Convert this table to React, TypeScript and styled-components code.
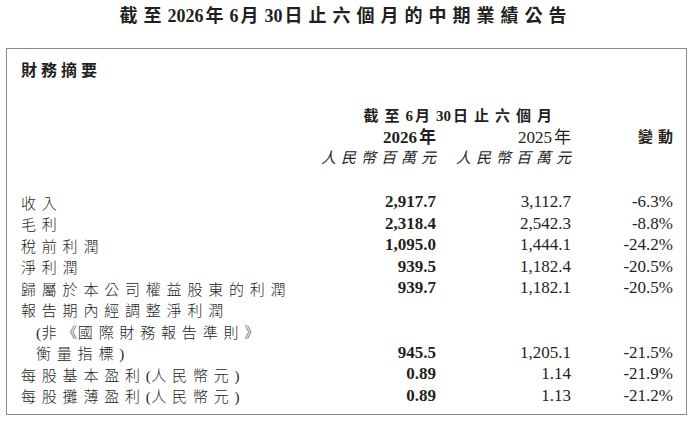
import styled, { createGlobalStyle } from "styled-components";

const GlobalStyle = createGlobalStyle`
  html, body {
    margin: 0;
    padding: 0;
    background: #ffffff;
  }
  body {
    font-family: "Liberation Serif", "Noto Sans CJK TC", serif;
    color: #231f20;
  }
`;

type Row = {
  label: string;
  indent?: boolean;
  current?: string;
  prior?: string;
  change?: string;
};

const rows: Row[] = [
  { label: "收入", current: "2,917.7", prior: "3,112.7", change: "-6.3%" },
  { label: "毛利", current: "2,318.4", prior: "2,542.3", change: "-8.8%" },
  { label: "稅前利潤", current: "1,095.0", prior: "1,444.1", change: "-24.2%" },
  { label: "淨利潤", current: "939.5", prior: "1,182.4", change: "-20.5%" },
  {
    label: "歸屬於本公司權益股東的利潤",
    current: "939.7",
    prior: "1,182.1",
    change: "-20.5%",
  },
  { label: "報告期內經調整淨利潤" },
  { label: "(非《國際財務報告準則》", indent: true },
  {
    label: "衡量指標)",
    indent: true,
    current: "945.5",
    prior: "1,205.1",
    change: "-21.5%",
  },
  { label: "每股基本盈利(人民幣元)", current: "0.89", prior: "1.14", change: "-21.9%" },
  { label: "每股攤薄盈利(人民幣元)", current: "0.89", prior: "1.13", change: "-21.2%" },
];

// brackets sit tighter than the spaced-out characters around them
function renderLabel(text: string) {
  return text.split(/([()《》])/).map((part, i) =>
    /^[()《》]$/.test(part) ? <Paren key={i}>{part}</Paren> : part
  );
}

export default function App() {
  return (
    <Page>
      <GlobalStyle />
      <Title>
        截至<Num>2026</Num>年<Num>6</Num>月<Num>30</Num>日止六個月的中期業績公告
      </Title>
      <Box>
        <Heading>財務摘要</Heading>
        <HeadBlock>
          <HeadRow>
            <span />
            <PeriodCell>
              截至<Num>6</Num>月<Num>30</Num>日止六個月
            </PeriodCell>
            <span />
          </HeadRow>
          <HeadRow>
            <span />
            <YearCell $bold>
              <Num>2026</Num>年
            </YearCell>
            <YearCell>
              <Num>2025</Num>年
            </YearCell>
            <ChangeHead>
              <Tight>變動</Tight>
            </ChangeHead>
          </HeadRow>
          <HeadRow>
            <span />
            <UnitCell>
              <Tight>人民幣百萬元</Tight>
            </UnitCell>
            <UnitCell>
              <Tight>人民幣百萬元</Tight>
            </UnitCell>
            <span />
          </HeadRow>
        </HeadBlock>
        <DataGrid>
          {rows.map((r) => (
            <DataRow key={r.label}>
              <Label $indent={r.indent}>{renderLabel(r.label)}</Label>
              <Value $bold>{r.current}</Value>
              <Value>{r.prior}</Value>
              <Value>{r.change}</Value>
            </DataRow>
          ))}
        </DataGrid>
      </Box>
    </Page>
  );
}

const Page = styled.div`
  width: 692px;
  height: 422px;
  overflow: hidden;
`;

const Num = styled.span`
  margin-right: 2px;
  letter-spacing: 0;
`;

const Paren = styled.span`
  letter-spacing: 0.5px;
`;

const Tight = styled.span`
  margin-right: -5px;
`;

const Title = styled.h1`
  margin: 5px 0 0;

  font-size: 18px;
  font-weight: 700;
  line-height: 22px;
  letter-spacing: 6px;
  text-align: center;
`;

const Box = styled.section`
  margin: 21px 0 0 6px;
  width: 681px;
  box-sizing: border-box;
  padding: 11px 13px 7px 14px;

  border: 1px solid #8a8a8a;
`;

const Heading = styled.h2`
  margin: 0;

  font-size: 16px;
  font-weight: 700;
  line-height: 22px;
  letter-spacing: 4px;
`;

const columns = "1fr 130px 135px 102px";

const HeadBlock = styled.div`
  margin-top: 23.5px;
`;

const HeadRow = styled.div`
  display: grid;
  grid-template-columns: ${columns};
  align-items: center;
  height: 21px;

  font-size: 15px;
  line-height: 21px;
`;

const PeriodCell = styled.div`
  grid-column: 2 / 4;
  padding-right: 13px;

  font-weight: 700;
  letter-spacing: 6px;
  text-align: right;
  white-space: nowrap;
`;

const YearCell = styled.div<{ $bold?: boolean }>`
  font-size: 17px;
  font-weight: ${(p) => (p.$bold ? 700 : 400)};
  text-align: right;
  white-space: nowrap;
`;

const ChangeHead = styled.div`
  font-weight: 700;
  letter-spacing: 5px;
  text-align: right;
`;

const UnitCell = styled.div`
  font-style: italic;
  letter-spacing: 5px;
  text-align: right;
  white-space: nowrap;
`;

const DataGrid = styled.div`
  margin-top: 23px;
`;

const DataRow = styled.div`
  display: grid;
  grid-template-columns: ${columns};
  align-items: center;
  height: 21.5px;
`;

const Label = styled.div<{ $indent?: boolean }>`
  padding-left: ${(p) => (p.$indent ? "15px" : "0")};

  font-size: 15px;
  font-weight: 300;
  letter-spacing: 5.8px;
  white-space: nowrap;
`;

const Value = styled.div<{ $bold?: boolean }>`
  font-size: 17px;
  font-weight: ${(p) => (p.$bold ? 700 : 400)};
  text-align: right;
  white-space: nowrap;
`;
